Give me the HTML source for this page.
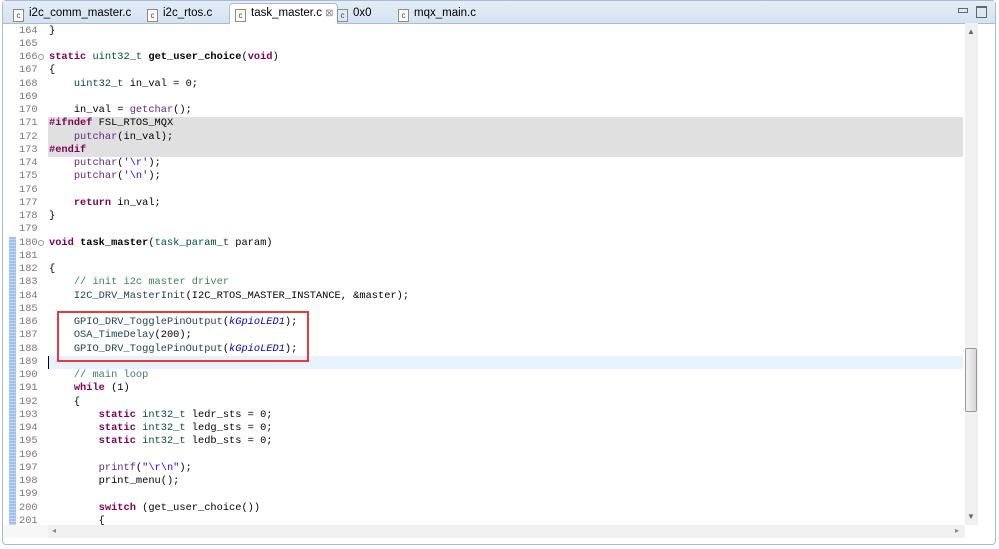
<!DOCTYPE html>
<html><head><meta charset="utf-8"><style>
body{margin:0;width:999px;height:549px;background:#fff;overflow:hidden;position:relative;font-family:"Liberation Sans",sans-serif}
.win{position:absolute;left:2px;top:0;width:994px;height:545px;border:1px solid #a9bcd4;border-radius:4px;background:#fff;box-sizing:border-box}
.tabbar{position:absolute;left:0;top:0;right:0;height:22px;background:linear-gradient(#e4edf7,#d5e3f1);border-bottom:1px solid #a9bcd4}
.tab{position:absolute;top:3px;height:19px;font-size:11.5px;color:#000;line-height:19px}
.tab .ic{display:inline-block;width:9px;height:11px;border:1px solid #8a8a8a;background:#fffef4;font-size:8px;line-height:11px;text-align:center;vertical-align:-2px;margin-right:5px;color:#345}
.active{background:#fff;border:1px solid #a9bcd4;border-bottom:none;border-radius:4px 4px 0 0;height:20px;top:2px}
.code{position:absolute;left:0;top:0;font-family:"Liberation Mono",monospace;font-size:10.35px;white-space:pre;color:#000}
.ln{position:absolute;height:13.25px;line-height:13.25px;left:0;width:960px}
.n{position:absolute;left:19px;color:#787878}
.t{position:absolute;left:49px}
.fold{position:absolute;left:38px;top:3px;width:6px;height:6px;border:1px solid #999;border-radius:50%;box-sizing:border-box}
.k{color:#7f0055;font-weight:bold}
.ty{color:#005032}
.f{color:#1a3f50}
.fb{font-weight:bold}
.p{color:#642880}
.c{color:#3f7f5f}
.s{color:#2a00ff}
.e{color:#0000c0;font-style:italic}
</style></head><body>
<div class="win">
<div class="tabbar">
<div class="tab" style="left:10px"><span class="ic">c</span>i2c_comm_master.c</div>
<div class="tab" style="left:144px"><span class="ic">c</span>i2c_rtos.c</div>
<div class="tab active" style="left:226px;width:102px;padding-left:5px"><span class="ic">c</span>task_master.c <span style="color:#888;font-size:10px">⊠</span></div>
<div class="tab" style="left:334px"><span class="ic" style="background:#dfe9f5">c</span>0x0</div>
<div class="tab" style="left:395px"><span class="ic">c</span>mqx_main.c</div>
<div style="position:absolute;left:955px;top:7px;width:8px;height:3px;border:1px solid #666"></div>
<div style="position:absolute;left:973px;top:5px;width:9px;height:9px;border:1px solid #666;border-top-width:2px"></div>
</div>
</div>
<div style="position:absolute;left:48px;top:117px;width:915px;height:40px;background:#e0e0e0"></div>
<div style="position:absolute;left:48px;top:356px;width:915px;height:13px;background:#e8f2fe"></div>
<div style="position:absolute;left:9px;top:237px;width:7px;height:288px;background:repeating-linear-gradient(#9cc1ee 0 2px,#c4dbf5 2px 3px)"></div>
<div style="position:absolute;left:57px;top:311px;width:252px;height:51px;border:2px solid #e53b3b;box-sizing:border-box"></div>
<div style="position:absolute;left:48px;top:356px;width:1px;height:13px;background:#000"></div>
<div style="position:absolute;left:965px;top:23px;width:13px;height:502px;background:#f0f0f0"></div>
<div style="position:absolute;left:965px;top:348px;width:12px;height:64px;border:1px solid #999;border-radius:2px;background:linear-gradient(90deg,#f3f3f3,#d6d6d6);box-sizing:border-box"></div>
<div style="position:absolute;left:48px;top:525px;width:917px;height:13px;background:#f0f0f0"></div>
<div style="position:absolute;left:3px;top:525px;width:45px;height:13px;background:#f7f7f7"></div>
<div class="code">
<div class="ln" style="top:24.5px"><span class="n">164</span><span class="t">}</span></div>
<div class="ln" style="top:37.75px"><span class="n">165</span></div>
<div class="ln" style="top:51px"><span class="n">166</span><span class="fold"></span><span class="t"><span class="k">static</span> <span class="ty">uint32_t</span> <span class="fb">get_user_choice</span>(<span class="k">void</span>)</span></div>
<div class="ln" style="top:64.25px"><span class="n">167</span><span class="t">{</span></div>
<div class="ln" style="top:77.5px"><span class="n">168</span><span class="t">    <span class="ty">uint32_t</span> in_val = 0;</span></div>
<div class="ln" style="top:90.75px"><span class="n">169</span></div>
<div class="ln" style="top:104px"><span class="n">170</span><span class="t">    in_val = <span class="p">getchar</span>();</span></div>
<div class="ln" style="top:117.25px"><span class="n">171</span><span class="t"><span class="k">#ifndef</span> FSL_RTOS_MQX</span></div>
<div class="ln" style="top:130.5px"><span class="n">172</span><span class="t">    <span class="p">putchar</span>(in_val);</span></div>
<div class="ln" style="top:143.75px"><span class="n">173</span><span class="t"><span class="k">#endif</span></span></div>
<div class="ln" style="top:157px"><span class="n">174</span><span class="t">    <span class="p">putchar</span>(<span class="s">'\r'</span>);</span></div>
<div class="ln" style="top:170.25px"><span class="n">175</span><span class="t">    <span class="p">putchar</span>(<span class="s">'\n'</span>);</span></div>
<div class="ln" style="top:183.5px"><span class="n">176</span></div>
<div class="ln" style="top:196.75px"><span class="n">177</span><span class="t">    <span class="k">return</span> in_val;</span></div>
<div class="ln" style="top:210px"><span class="n">178</span><span class="t">}</span></div>
<div class="ln" style="top:223.25px"><span class="n">179</span></div>
<div class="ln" style="top:236.5px"><span class="n">180</span><span class="fold"></span><span class="t"><span class="k">void</span> <span class="fb">task_master</span>(<span class="ty">task_param_t</span> param)</span></div>
<div class="ln" style="top:249.75px"><span class="n">181</span></div>
<div class="ln" style="top:263px"><span class="n">182</span><span class="t">{</span></div>
<div class="ln" style="top:276.25px"><span class="n">183</span><span class="t">    <span class="c">// init i2c master driver</span></span></div>
<div class="ln" style="top:289.5px"><span class="n">184</span><span class="t">    <span class="f">I2C_DRV_MasterInit</span>(I2C_RTOS_MASTER_INSTANCE, &amp;master);</span></div>
<div class="ln" style="top:302.75px"><span class="n">185</span></div>
<div class="ln" style="top:316px"><span class="n">186</span><span class="t">    <span class="f">GPIO_DRV_TogglePinOutput</span>(<span class="e">kGpioLED1</span>);</span></div>
<div class="ln" style="top:329.25px"><span class="n">187</span><span class="t">    <span class="f">OSA_TimeDelay</span>(200);</span></div>
<div class="ln" style="top:342.5px"><span class="n">188</span><span class="t">    <span class="f">GPIO_DRV_TogglePinOutput</span>(<span class="e">kGpioLED1</span>);</span></div>
<div class="ln" style="top:355.75px"><span class="n">189</span></div>
<div class="ln" style="top:369px"><span class="n">190</span><span class="t">    <span class="c">// main loop</span></span></div>
<div class="ln" style="top:382.25px"><span class="n">191</span><span class="t">    <span class="k">while</span> (1)</span></div>
<div class="ln" style="top:395.5px"><span class="n">192</span><span class="t">    {</span></div>
<div class="ln" style="top:408.75px"><span class="n">193</span><span class="t">        <span class="k">static</span> <span class="ty">int32_t</span> ledr_sts = 0;</span></div>
<div class="ln" style="top:422px"><span class="n">194</span><span class="t">        <span class="k">static</span> <span class="ty">int32_t</span> ledg_sts = 0;</span></div>
<div class="ln" style="top:435.25px"><span class="n">195</span><span class="t">        <span class="k">static</span> <span class="ty">int32_t</span> ledb_sts = 0;</span></div>
<div class="ln" style="top:448.5px"><span class="n">196</span></div>
<div class="ln" style="top:461.75px"><span class="n">197</span><span class="t">        <span class="p">printf</span>(<span class="s">"\r\n"</span>);</span></div>
<div class="ln" style="top:475px"><span class="n">198</span><span class="t">        print_menu();</span></div>
<div class="ln" style="top:488.25px"><span class="n">199</span></div>
<div class="ln" style="top:501.5px"><span class="n">200</span><span class="t">        <span class="k">switch</span> (get_user_choice())</span></div>
<div class="ln" style="top:514.75px;height:10px;overflow:hidden"><span class="n">201</span><span class="t">        {</span></div>
</div>
<div style="position:absolute;left:52px;top:526px;font-size:8px;color:#888">◂</div>
<div style="position:absolute;left:955px;top:526px;font-size:8px;color:#888">▸</div>
<div style="position:absolute;left:967px;top:27px;font-size:8px;color:#666">▲</div>
<div style="position:absolute;left:967px;top:512px;font-size:8px;color:#666">▼</div>
</body></html>
